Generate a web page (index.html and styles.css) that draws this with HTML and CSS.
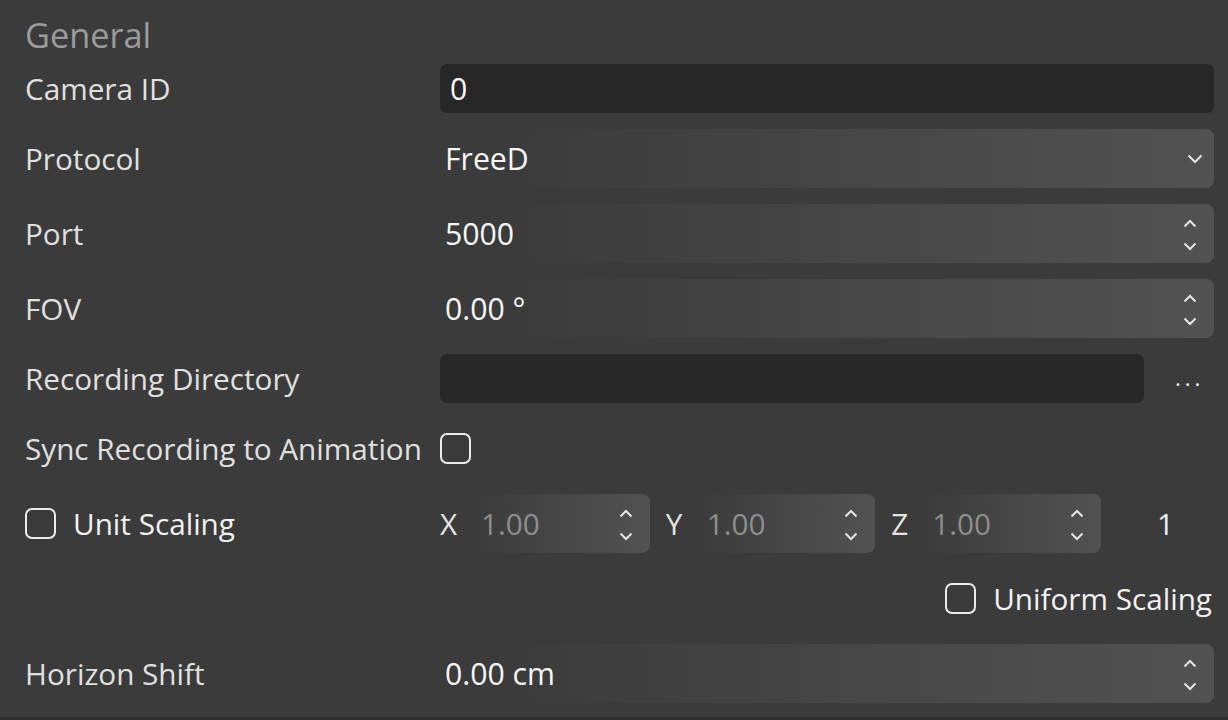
FILE: index.html
```html
<!DOCTYPE html>
<html>
<head>
<meta charset="utf-8">
<link rel="stylesheet" href="styles.css">
</head>
<body>
<div class="panel">
  <div class="section-title">General</div>

  <div class="row row-short">
    <div class="label">Camera ID</div>
    <div class="input"><span class="value">0</span></div>
  </div>

  <div class="row">
    <div class="label">Protocol</div>
    <div class="field">
      <span class="value">FreeD</span>
      <svg class="chev" width="16" height="10" viewBox="0 0 16 10"><path d="M1.5 1.5 L8 8 L14.5 1.5" fill="none" stroke="#e6e6e6" stroke-width="2"/></svg>
    </div>
  </div>

  <div class="row">
    <div class="label">Port</div>
    <div class="field">
      <span class="value">5000</span>
      <svg class="spin" width="14" height="34" viewBox="0 0 14 34"><path d="M1.5 9.5 L7 4 L12.5 9.5 M1.5 26.5 L7 32 L12.5 26.5" fill="none" stroke="#e6e6e6" stroke-width="2"/></svg>
    </div>
  </div>

  <div class="row">
    <div class="label">FOV</div>
    <div class="field">
      <span class="value">0.00 °</span>
      <svg class="spin" width="14" height="34" viewBox="0 0 14 34"><path d="M1.5 9.5 L7 4 L12.5 9.5 M1.5 26.5 L7 32 L12.5 26.5" fill="none" stroke="#e6e6e6" stroke-width="2"/></svg>
    </div>
  </div>

  <div class="row row-short">
    <div class="label">Recording Directory</div>
    <div class="browse">
      <div class="input"></div>
      <div class="dots">...</div>
    </div>
  </div>

  <div class="row">
    <div class="label">Sync Recording to Animation</div>
    <div class="control"><span class="checkbox"></span></div>
  </div>

  <div class="row">
    <div class="label check-label"><span class="checkbox"></span><span class="check-text">Unit Scaling</span></div>
    <div class="vector">
      <div class="axis">
        <span class="axis-name">X</span>
        <span class="axis-value">1.00</span>
        <svg class="spin" width="14" height="34" viewBox="0 0 14 34"><path d="M1.5 9.5 L7 4 L12.5 9.5 M1.5 26.5 L7 32 L12.5 26.5" fill="none" stroke="#e6e6e6" stroke-width="2"/></svg>
      </div>
      <div class="axis">
        <span class="axis-name">Y</span>
        <span class="axis-value">1.00</span>
        <svg class="spin" width="14" height="34" viewBox="0 0 14 34"><path d="M1.5 9.5 L7 4 L12.5 9.5 M1.5 26.5 L7 32 L12.5 26.5" fill="none" stroke="#e6e6e6" stroke-width="2"/></svg>
      </div>
      <div class="axis">
        <span class="axis-name">Z</span>
        <span class="axis-value">1.00</span>
        <svg class="spin" width="14" height="34" viewBox="0 0 14 34"><path d="M1.5 9.5 L7 4 L12.5 9.5 M1.5 26.5 L7 32 L12.5 26.5" fill="none" stroke="#e6e6e6" stroke-width="2"/></svg>
      </div>
      <div class="ratio">1</div>
    </div>
  </div>

  <div class="row row-right">
    <span class="checkbox"></span><span class="check-text">Uniform Scaling</span>
  </div>

  <div class="row">
    <div class="label">Horizon Shift</div>
    <div class="field">
      <span class="value">0.00 cm</span>
      <svg class="spin" width="14" height="34" viewBox="0 0 14 34"><path d="M1.5 9.5 L7 4 L12.5 9.5 M1.5 26.5 L7 32 L12.5 26.5" fill="none" stroke="#e6e6e6" stroke-width="2"/></svg>
    </div>
  </div>
</div>
</body>
</html>
```

FILE: styles.css
```css
html, body {
  margin: 0;
  padding: 0;
  background: #3b3b3b;
}

.panel {
  box-sizing: border-box;
  width: 1228px;
  height: 720px;
  padding: 0 14px 0 25px;
  border-bottom: 3px solid #2d2d2d;
  font-family: "Open Sans", "Noto Sans", sans-serif;
  font-size: 29.7px;
  color: #e2e2e2;
  overflow: hidden;
}

.section-title {
  height: 64px;
  box-sizing: border-box;
  padding-top: 4px;
  display: flex;
  align-items: center;
  color: #9c9c9c;
  font-size: 34.3px;
}

.row {
  display: grid;
  grid-template-columns: 415px 1fr;
  align-items: center;
  height: 59px;
  margin-bottom: 16px;
}

.row-short {
  height: 49px;
}

.label {
  white-space: nowrap;
  color: #e0e0e0;
}

.value {
  color: #f6f6f6;
  font-size: 30.2px;
}

.input {
  height: 49px;
  box-sizing: border-box;
  background: #272727;
  border-radius: 7px;
  padding-left: 10px;
  display: flex;
  align-items: center;
}

.field {
  height: 59px;
  box-sizing: border-box;
  border-radius: 8px;
  background: linear-gradient(to right, #3b3b3b 8%, #525252 100%);
  padding-left: 5px;
  padding-right: 17px;
  display: flex;
  align-items: center;
  justify-content: space-between;
}

.field .chev {
  margin-right: -6px;
}

.browse {
  display: flex;
  align-items: center;
  height: 49px;
}

.browse .input {
  flex: 1;
}

.dots {
  width: 70px;
  box-sizing: border-box;
  padding-left: 31px;
  color: #f0f0f0;
  font-size: 22px;
  letter-spacing: 4px;
  line-height: 49px;
  padding-bottom: 2px;
}

.control {
  display: flex;
  align-items: center;
}

.checkbox {
  display: inline-block;
  width: 31px;
  height: 31px;
  box-sizing: border-box;
  border: 2px solid #ececec;
  border-radius: 7px;
  flex: none;
}

.check-label {
  display: flex;
  align-items: center;
}

.check-text {
  margin-left: 17px;
  color: #f2f2f2;
  white-space: nowrap;
}

.vector {
  display: flex;
  align-items: center;
  gap: 16px;
  height: 59px;
}

.axis {
  flex: 1;
  height: 59px;
  box-sizing: border-box;
  border-radius: 8px;
  background: linear-gradient(to right, #3b3b3b 15%, #525252 100%);
  padding-right: 17px;
  display: flex;
  align-items: center;
}

.axis-name {
  width: 41px;
  color: #e4e4e4;
}

.axis-value {
  flex: 1;
  color: #8e8e8e;
}

.ratio {
  width: 97px;
  text-align: center;
  color: #f0f0f0;
}

.row-right {
  display: flex;
  justify-content: flex-end;
  padding-right: 2px;
}
```
